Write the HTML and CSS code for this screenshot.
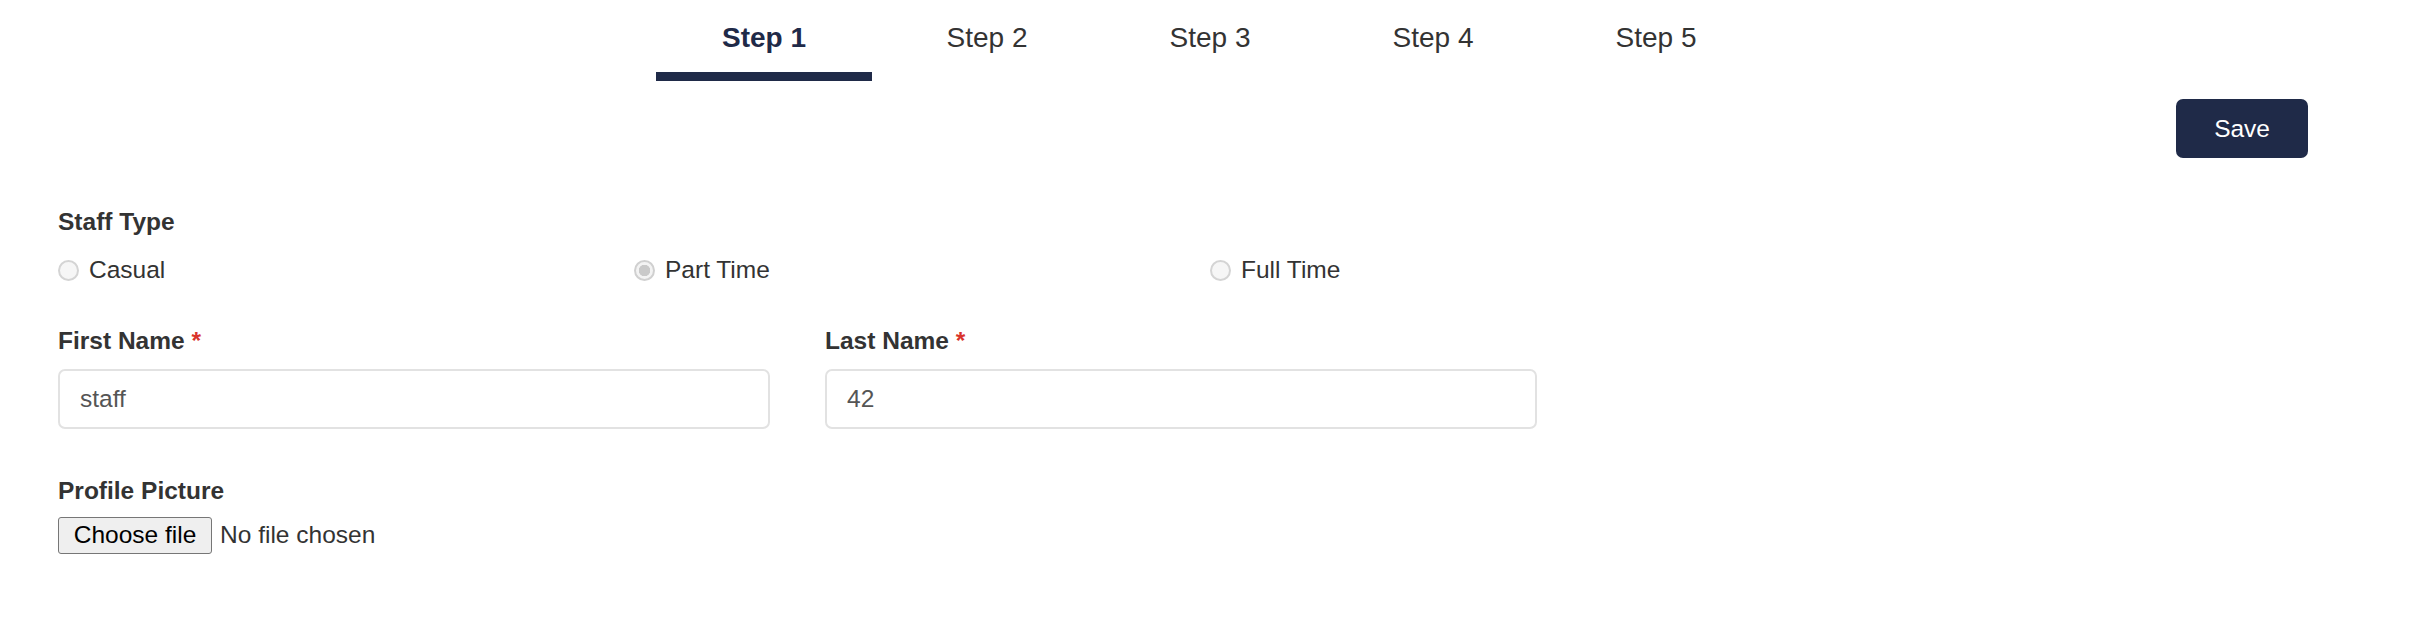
FILE: index.html
```html
<!DOCTYPE html>
<html lang="en">
<head>
    <meta charset="UTF-8">
    <meta name="viewport" content="width=device-width, initial-scale=1.0">
    <title>Staff Wizard</title>
    <link rel="stylesheet" href="styles.css">
</head>
<body>

<!-- Wizard steps -->
<nav class="steps">
    <a href="#" class="step active">Step 1</a>
    <a href="#" class="step">Step 2</a>
    <a href="#" class="step">Step 3</a>
    <a href="#" class="step">Step 4</a>
    <a href="#" class="step">Step 5</a>
</nav>

<div class="actions">
    <button type="button" class="save-btn">Save</button>
</div>

<form class="staff-form">
    <!-- Staff type -->
    <div class="form-group">
        <label class="field-label">Staff Type</label>
        <div class="radio-row">
            <label class="radio-option"><input type="radio" name="staffType" value="casual" disabled> Casual</label>
            <label class="radio-option"><input type="radio" name="staffType" value="part" checked disabled> Part Time</label>
            <label class="radio-option"><input type="radio" name="staffType" value="full" disabled> Full Time</label>
        </div>
    </div>

    <!-- Names -->
    <div class="name-row">
        <div class="form-group">
            <label class="field-label" for="firstName">First Name <span class="required">*</span></label>
            <input type="text" id="firstName" class="text-input" value="staff">
        </div>
        <div class="form-group">
            <label class="field-label" for="lastName">Last Name <span class="required">*</span></label>
            <input type="text" id="lastName" class="text-input" value="42">
        </div>
    </div>

    <!-- Profile picture -->
    <div class="form-group picture-group">
        <label class="field-label">Profile Picture</label>
        <div class="file-picker">
            <label for="profilePicture" class="file-btn">Choose file</label>
            <span class="file-name">No file chosen</span>
            <input type="file" id="profilePicture" class="file-input">
        </div>
    </div>
</form>

</body>
</html>
```

FILE: styles.css
```css
body {
    margin: 0;
    font-family: "Liberation Sans", Arial, sans-serif;
    color: #333;
    background-color: #fff;
}
.steps {
    display: flex;
    justify-content: center;
}
.step {
    width: 216px;
    margin: 0 3.5px;
    padding: 22px 0 18px;
    font-size: 28px;
    line-height: 32px;
    text-align: center;
    color: #333;
    text-decoration: none;
    border-bottom: 9px solid transparent;
}
.step.active {
    font-weight: bold;
    color: #1f2a48;
    border-bottom-color: #1f2a48;
}
.actions {
    display: flex;
    justify-content: flex-end;
    padding-right: 112px;
    margin-top: 18px;
}
.save-btn {
    padding: 15.5px 38px;
    font-family: inherit;
    font-size: 24.5px;
    line-height: 28px;
    color: #fff;
    background-color: #1f2a48;
    border: none;
    border-radius: 7px;
    cursor: pointer;
}
.staff-form {
    padding: 0 58px;
    margin-top: 50px;
}
.field-label {
    display: block;
    font-size: 24.5px;
    line-height: 28px;
    font-weight: bold;
    color: #333;
}
.required {
    color: #d9342b;
}
.radio-row {
    display: grid;
    grid-template-columns: repeat(3, 576px);
    margin-top: 20px;
}
.radio-option {
    display: flex;
    align-items: center;
    gap: 10px;
    font-size: 24.5px;
    line-height: 28px;
    color: #333;
}
.radio-option input {
    appearance: none;
    -webkit-appearance: none;
    width: 21px;
    height: 21px;
    margin: 1px 0 0;
    border: 2px solid #d4d4d4;
    border-radius: 50%;
    background-color: #f6f6f6;
}
.radio-option input:checked {
    background: radial-gradient(circle, #c9c9c9 0 5.5px, #f3f3f3 6px);
    border-color: #d0d0d0;
}
.name-row {
    display: grid;
    grid-template-columns: 712px 712px;
    column-gap: 55px;
    margin-top: 43px;
}
.text-input {
    display: block;
    box-sizing: border-box;
    width: 100%;
    height: 60px;
    margin-top: 13.5px;
    padding: 0 20px;
    font-family: inherit;
    font-size: 24.5px;
    color: #555;
    border: 2px solid #e2e2e2;
    border-radius: 7px;
    outline: none;
}
.picture-group {
    margin-top: 48.5px;
}
.file-picker {
    display: flex;
    align-items: center;
    gap: 8px;
    margin-top: 11.5px;
    font-size: 24.5px;
}
.file-btn {
    box-sizing: border-box;
    height: 37px;
    width: 154px;
    line-height: 34px;
    text-align: center;
    color: #000;
    background-color: #efefef;
    border: 1.5px solid #767676;
    border-radius: 3px;
    cursor: pointer;
}
.file-name {
    color: #333;
}
.file-input {
    display: none;
}
```
